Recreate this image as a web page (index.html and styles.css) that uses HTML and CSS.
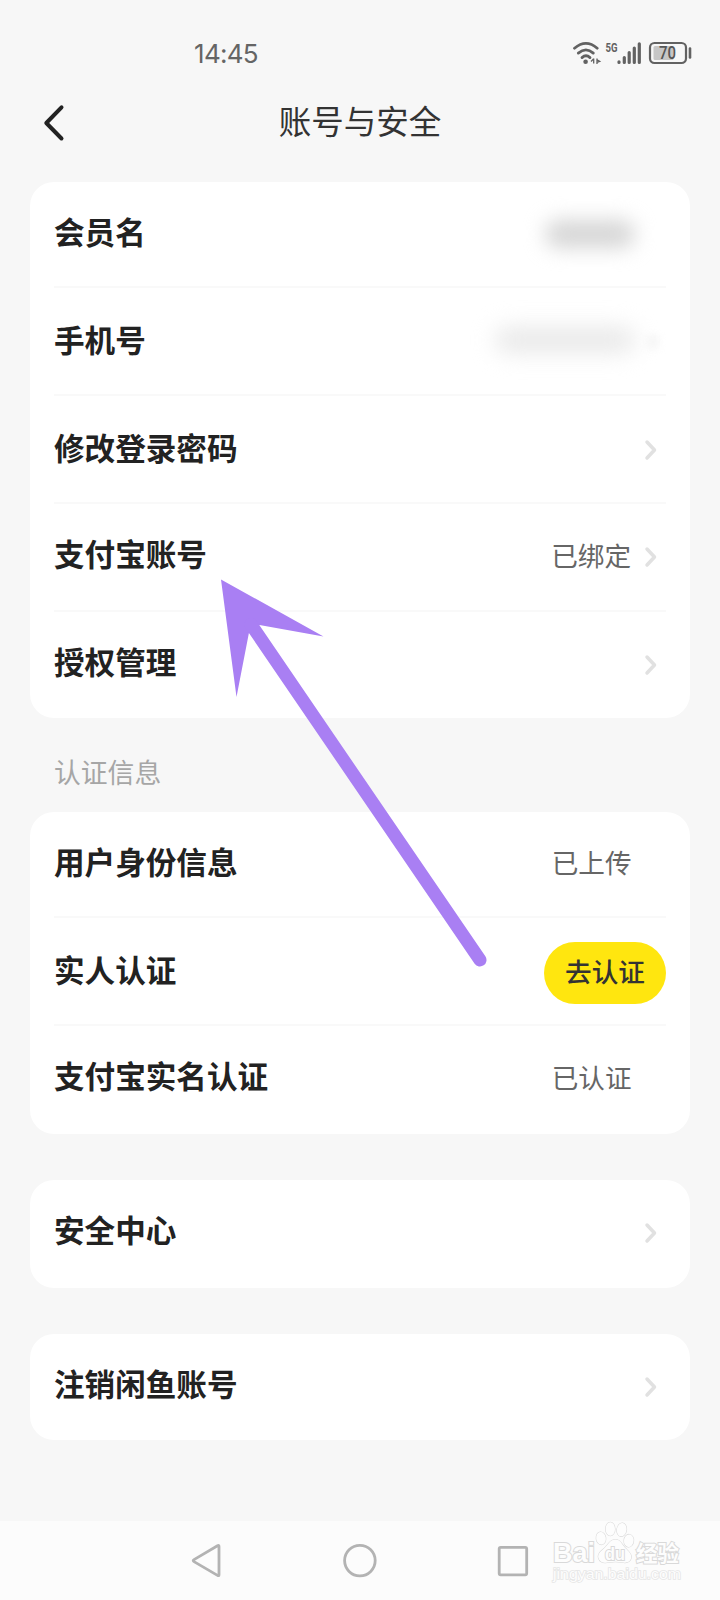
FILE: index.html
```html
<!DOCTYPE html>
<html lang="zh-CN">
<head>
<meta charset="utf-8">
<title>账号与安全</title>
<link rel="stylesheet" href="styles.css">
</head>
<body>
<div class="screen">
  <div class="status">
    <span class="time">14:45</span>
    <svg class="status-icons" width="130" height="30" viewBox="570 38 130 30">
      <g fill="none" stroke="#626262" stroke-width="2.8" stroke-linecap="round">
        <path d="M574.5 48.2Q586 38.6 597.2 48.2"/>
        <path d="M578.3 53.1Q586 46.6 593.3 53.1"/>
        <path d="M582 57.6Q586 54 590 57.6"/>
      </g>
      <circle cx="585.6" cy="61.8" r="2.3" fill="#626262"/>
      <path d="M593.700 58.500v5M591 61.500l2.700-2.700M597 64v-5.500M597 59.800l2.700 1.500-2.700 1" fill="none" stroke="#626262" stroke-width="1.3"/>
      <text x="605.5" y="52" class="net" textLength="12" lengthAdjust="spacingAndGlyphs">5G</text>
      <path d="M619 61.800v.6M624.300 57.500v5M629.200 52.500v10M634.300 48v14.500M639.300 43.800v18.700" stroke="#626262" stroke-width="3.2" stroke-linecap="round"/>
      <rect x="650" y="43" width="36" height="20" rx="4.5" fill="none" stroke="#626262" stroke-width="2.2"/>
      <rect x="653.5" y="46" width="20" height="14" rx="1.5" fill="#c6c6c6"/>
      <path d="M690 48.500v9" stroke="#626262" stroke-width="2.6" stroke-linecap="round"/>
      <text x="659" y="58.800" class="charge" textLength="17" lengthAdjust="spacingAndGlyphs">70</text>
    </svg>
  </div>
  <header class="header">
    <svg class="back" width="24" height="40" viewBox="0 0 24 40"><path d="M19.500 4.300 4.300 20l15.200 15.500"/></svg>
    <h1 class="title">账号与安全</h1>
  </header>
  <main class="main">
    <section class="card">
      <div class="row first"><span class="label">会员名</span><span class="mask name"></span></div>
      <div class="row low"><span class="label">手机号</span><span class="mask phone"></span><span class="mask dot"></span></div>
      <div class="row low"><span class="label">修改登录密码</span><svg class="chev" width="16" height="24" viewBox="0 0 16 24"><path d="m4 4 7.500 8L4 20"/></svg></div>
      <div class="row high"><span class="label">支付宝账号</span><span class="value">已绑定</span><svg class="chev" width="16" height="24" viewBox="0 0 16 24"><path d="m4 4 7.500 8L4 20"/></svg></div>
      <div class="row last high"><span class="label">授权管理</span><svg class="chev" width="16" height="24" viewBox="0 0 16 24"><path d="m4 4 7.500 8L4 20"/></svg></div>
    </section>
    <h2 class="group">认证信息</h2>
    <section class="card">
      <div class="row first"><span class="label">用户身份信息</span><span class="value alone">已上传</span></div>
      <div class="row low"><span class="label">实人认证</span><button class="verify">去认证</button></div>
      <div class="row end"><span class="label">支付宝实名认证</span><span class="value alone">已认证</span></div>
    </section>
    <section class="card spaced">
      <div class="row end"><span class="label">安全中心</span><svg class="chev" width="16" height="24" viewBox="0 0 16 24"><path d="m4 4 7.500 8L4 20"/></svg></div>
    </section>
    <section class="card spaced">
      <div class="row last high"><span class="label">注销闲鱼账号</span><svg class="chev" width="16" height="24" viewBox="0 0 16 24"><path d="m4 4 7.500 8L4 20"/></svg></div>
    </section>
  </main>
  <nav class="nav">
    <svg width="720" height="79" viewBox="0 1521 720 79">
      <g fill="none" stroke="#b3b3b3" stroke-width="2.8" stroke-linejoin="round">
        <path d="M219 1546.500v28.200q0 1.600-1.500.7L194 1561.600q-1.600-1 0-2l23.500-13.800q1.500-.9 1.500.7Z"/>
        <circle cx="359.900" cy="1560.600" r="15.300"/>
        <rect x="499.200" y="1547.300" width="27.500" height="27.500" rx="1.500"/>
      </g>
      <g class="mark">
        <text x="553" y="1562" class="mark-latin" textLength="42" lengthAdjust="spacingAndGlyphs">Bai</text>
        <ellipse cx="601" cy="1538.300" rx="4.800" ry="6.300" transform="rotate(-8 601 1538.300)"/>
        <ellipse cx="610.300" cy="1529" rx="4.700" ry="6.700"/>
        <ellipse cx="621.700" cy="1529.700" rx="4.800" ry="6.700" transform="rotate(8 621.700 1529.700)"/>
        <ellipse cx="628.800" cy="1540.700" rx="4.800" ry="6.300" transform="rotate(5 628.800 1540.700)"/>
        <path d="M615.500 1539.500c-6 0-7.500 6-12 9.500-4 3-6 6-5 9 1.500 5 6.500 5.200 10.500 4.300 4-.8 9-.8 13 0 4 .9 8.500.2 9.200-4.800.5-4-3-6.500-6-9.500-3.500-3.800-4.700-8.500-9.700-8.500Z"/>
        <text x="605" y="1559.500" class="mark-du" textLength="20" lengthAdjust="spacingAndGlyphs">du</text>
        <text x="636" y="1560.500" class="mark-cjk" textLength="43" lengthAdjust="spacingAndGlyphs">经验</text>
        <text x="553" y="1579" class="mark-url" textLength="128" lengthAdjust="spacingAndGlyphs">jingyan.baidu.com</text>
      </g>
    </svg>
  </nav>
  <svg class="arrow" width="280" height="400" viewBox="215 573 280 400">
    <path d="m221 579.500 102.500 57-64-11.500-10.500 7.500-12.500 64.500Z" fill="#a97ff3"/>
    <path d="M251 624.500 480 960" stroke="#a97ff3" stroke-width="13" stroke-linecap="round"/>
  </svg>
</div>
</body>
</html>
```
FILE: styles.css
```css
* { box-sizing: border-box; }
body { margin: 0; background: #f7f7f7; font-family: Roboto, "Noto Sans CJK SC", sans-serif; }
.screen { position: relative; width: 720px; height: 1600px; display: flex; flex-direction: column; overflow: hidden; }
.status { height: 76px; padding: 38px 20px 0 194px; display: flex; justify-content: space-between; }
.time { font: 26px/32px Inter, sans-serif; letter-spacing: -0.7px; color: #656565; }
.net { font: bold 13.5px Roboto, sans-serif; fill: #626262; }
.charge { font: 500 17.5px Roboto, sans-serif; fill: #555; }
.header { height: 106px; display: grid; grid-template-columns: 24px 1fr 24px; padding: 0 42px; }
.back { margin-top: 27px; fill: none; stroke: #222; stroke-width: 4; stroke-linecap: round; stroke-linejoin: round; }
.title { margin: 23px 0 0; text-align: center; font-size: 32.5px; line-height: 48px; font-weight: 400; color: #333; }
.main { flex: 1; padding: 0 30px; }
.card { background: #fff; border-radius: 24px; padding: 0 24px; }
.row { height: 108px; display: flex; align-items: center; border-bottom: 2px solid #f9f9f9; }
.row.first { height: 106px; }
.row:last-child { border-bottom: 0; }
.row.last { height: 106px; }
.row.low { padding-top: 2px; }
.row.end { padding-bottom: 2px; }
.label { flex: 1; font-size: 30.6px; line-height: 44px; font-weight: 700; color: #222; }
.high .label { margin-bottom: 2px; }
.end .label { margin-bottom: 2px; }
.value { font-size: 26.6px; line-height: 40px; color: #666; margin-right: 12px; }
.value.alone { margin-right: 34.5px; }
.chev { margin-right: 7px; fill: none; stroke: #e1e1e1; stroke-width: 3.5; stroke-linecap: round; stroke-linejoin: round; }
.mask { border-radius: 14px; background: #d6d6d6; filter: blur(10px); }
.mask.name { width: 90px; height: 28px; margin-right: 31px; }
.mask.phone { width: 140px; height: 26px; margin: 0 13px 4px 0; background: #e9e9e9; filter: blur(11px); }
.mask.dot { width: 10px; height: 14px; margin-right: 8px; background: #f3f3f3; filter: blur(4px); }
.group { margin: 0; height: 94px; padding: 36px 24px 0; font-size: 26.8px; line-height: 40px; font-weight: 400; color: #a6a6a6; }
.verify { width: 122px; height: 62px; border: 0; margin-top: 2px; padding: 0 0 5px; border-radius: 31px; background: #ffe60f; color: #333; font: 500 26.6px "Noto Sans CJK SC", sans-serif; }
.spaced { margin-top: 46px; }
.nav { height: 79px; background: #fcfcfc; }
.nav svg { display: block; }
.mark { fill: #fdfdfd; stroke: #d9d9d9; stroke-width: 1.1; paint-order: stroke; }
.mark text { stroke-width: 2; }
.mark-latin { font: bold 27px "Liberation Sans", sans-serif; }
.mark-du { font: bold 18px "Liberation Sans", sans-serif; }
.mark-cjk { font: bold 22px "Liberation Sans", "Noto Sans CJK SC", sans-serif; }
.mark .mark-url { font: 14.5px "Liberation Sans", sans-serif; stroke: #e6e6e6; stroke-width: 1.5; }
.arrow { position: absolute; left: 215px; top: 573px; }
```
